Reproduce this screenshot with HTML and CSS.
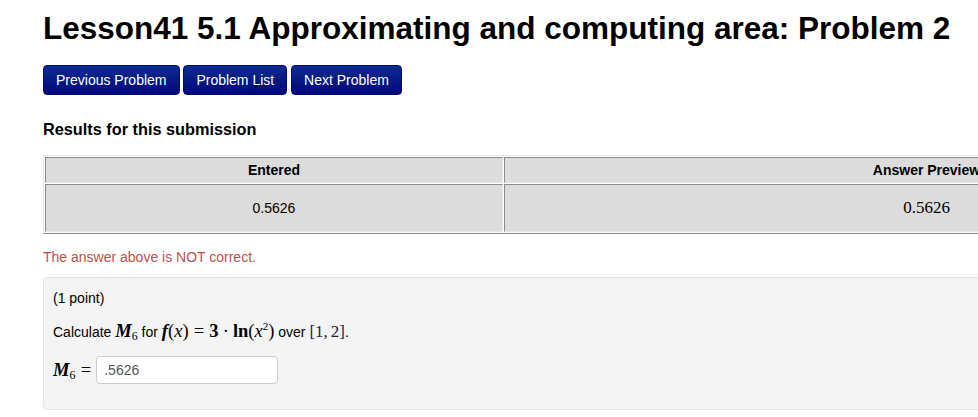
FILE: index.html
```html
<!DOCTYPE html>
<html lang="en">
<head>
  <meta charset="UTF-8" />
  <meta name="viewport" content="width=device-width, initial-scale=1.0"/>
  <title>Lesson41 5.1 Problem 2</title>
  <link rel="stylesheet" href="styles.css">
</head>
<body>

  <div class="page">
    <h1>Lesson41 5.1 Approximating and computing area: Problem 2</h1>

    <div class="nav-buttons">
      <a class="btn" href="#">Previous Problem</a>
      <a class="btn" href="#">Problem List</a>
      <a class="btn" href="#">Next Problem</a>
    </div>

    <h3 class="results-title">Results for this submission</h3>

    <table class="attempt-results">
      <tr>
        <th class="col-entered">Entered</th>
        <th class="col-preview">Answer Preview</th>
      </tr>
      <tr>
        <td>0.5626</td>
        <td class="preview">0.5626</td>
      </tr>
    </table>

    <p class="result-msg">The answer above is NOT correct.</p>

    <div class="problem-box">
      <p>(1 point)</p>
      <p>Calculate <span class="math"><b><i>M</i></b><sub>6</sub></span> for
        <span class="math"><b><i>f</i></b>(<i>x</i>)<span class="op">=</span><b>3</b><span class="op dot">·</span><b>ln</b>(<i>x</i><sup>2</sup>)</span> over
        <span class="math interval">[1,<span class="thin"></span>2]</span>.</p>
      <div class="answer-row">
        <span class="math"><b><i>M</i></b><sub>6</sub><span class="op">=</span></span>
        <input type="text" class="answer-input" value=".5626" />
      </div>
    </div>
  </div>

</body>
</html>
```

FILE: styles.css
```css
html, body {
  overflow: hidden;
}

body {
  margin: 0;
  font-family: "Liberation Sans", Arial, sans-serif;
  font-size: 14px;
  line-height: 20px;
  color: #000;
  background: #fff;
}

.page {
  width: 1308px;
  padding-left: 43px;
}

h1 {
  margin: 0;
  padding-top: 10px;
  font-size: 31.5px;
  line-height: 36px;
  font-weight: bold;
}

.nav-buttons {
  margin-top: 19px;
  height: 30px;
}

.btn {
  display: inline-block;
  padding: 4px 12px;
  border: 1px solid #000a6e;
  border-radius: 4px;
  background: linear-gradient(#0e2b8e, #00077f);
  color: white;
  text-decoration: none;
  font-size: 14px;
  line-height: 20px;
  vertical-align: top;
}

.results-title {
  margin: 24px 0 0;
  font-size: 16.3px;
  line-height: 20px;
  font-weight: bold;
}

.attempt-results {
  margin-top: 16px;
  width: 1308px;
  table-layout: fixed;
  border-collapse: separate;
  border-spacing: 1px;
  border: 1px solid;
  border-color: #e6e6e6 #8a8a8a #8a8a8a #e6e6e6;
  background: #fff;
}

.attempt-results th,
.attempt-results td {
  background: #dcdcdc;
  border: 1px solid;
  border-color: #8a8a8a #e6e6e6 #e6e6e6 #8a8a8a;
  text-align: center;
  padding: 2px 5px;
  font-size: 14px;
}

.attempt-results th {
  height: 20px;
}

.attempt-results td {
  height: 42px;
}

.col-entered {
  width: 446px;
}

.attempt-results td.preview {
  font-family: "Liberation Serif", "DejaVu Serif", serif;
  font-size: 17px;
}

.math {
  font-family: "Liberation Serif", "DejaVu Serif", serif;
  font-size: 18.5px;
  line-height: 1;
}

.math sub {
  font-size: 12px;
  line-height: 0;
  vertical-align: -3px;
}

.math sup {
  font-size: 11px;
  line-height: 0;
}

.op {
  margin: 0 0.28em;
}

.op.dot {
  margin: 0 0.22em;
}

.thin {
  display: inline-block;
  width: 0.17em;
}

.interval {
  color: #1d2240;
  font-size: 17px;
}

.result-msg {
  margin: 13px 0 0;
  color: #bf4f4c;
}

.problem-box {
  margin-top: 10px;
  width: 1290px;
  height: 112px;
  padding: 10px 9px 9px;
  background: #f4f4f4;
  border: 1px solid #e3e3e3;
  border-radius: 4px;
  font-size: 14px;
}

.problem-box p {
  margin: 0 0 14px;
}

.answer-row {
  display: flex;
  align-items: center;
  margin-top: 13px;
}

.answer-input {
  box-sizing: border-box;
  width: 182px;
  height: 28px;
  padding: 4px 7px;
  border: 1px solid #ccc;
  border-radius: 4px;
  background: #fff;
  color: #555;
  font-family: "Liberation Sans", Arial, sans-serif;
  font-size: 14px;
}
```
